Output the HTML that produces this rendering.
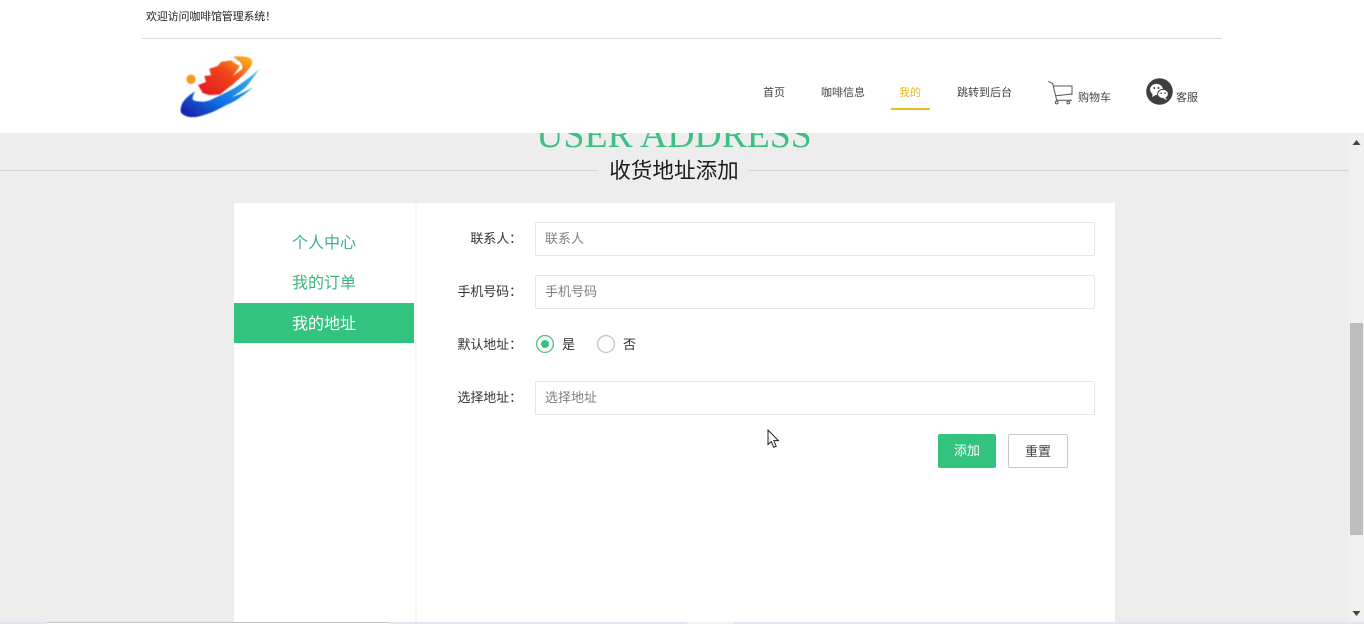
<!DOCTYPE html>
<html lang="zh">
<head>
<meta charset="utf-8">
<title>收货地址添加</title>
<style>
html,body{margin:0;padding:0;width:1364px;height:624px;overflow:hidden;background:#ededed;font-family:"Liberation Sans","WenQuanYi Zen Hei","Noto Sans CJK SC",sans-serif;}
.a{position:absolute;white-space:nowrap;}
.t{position:absolute;white-space:nowrap;line-height:20px;height:20px;}
.inp{position:absolute;left:535px;width:558px;height:32px;border:1px solid #e6e6e6;background:#fff;border-radius:2px;font-size:13px;line-height:32px;color:#808080;text-indent:9px;}
.lb{position:absolute;width:100px;left:422px;text-align:right;font-size:13px;line-height:20px;color:#333;letter-spacing:-.1px;}
.nav{position:absolute;font-size:11px;line-height:16px;color:#444;white-space:nowrap;}
.side{position:absolute;left:234px;width:180px;height:40px;line-height:42px;text-align:center;font-size:16px;color:#3cb57e;}
</style>
</head>
<body>
<!-- content -->
<div class="a" style="left:0;top:170px;width:1349px;height:1px;background:#d4d4d4"></div>
<div class="a" style="left:598px;top:155px;width:150px;height:30px;background:#ededed"></div>
<div class="a" style="left:534px;top:113px;width:280px;text-align:center;font-family:'Liberation Serif',serif;font-size:37.7px;line-height:44px;color:#3cc083;">USER ADDRESS</div>
<div class="a" style="left:598px;top:156px;width:152px;text-align:center;font-size:21.600px;line-height:30px;color:#1c1c1c;">收货地址添加</div>

<div class="a" style="left:234px;top:203px;width:881px;height:419px;background:#fff"></div>
<div class="a" style="left:415px;top:203px;width:2px;height:419px;background:#f4f6f8"></div>

<div class="side" style="top:223px">个人中心</div>
<div class="side" style="top:263px">我的订单</div>
<div class="side" style="top:303px;background:#32c37e;color:#fff;line-height:43px">我的地址</div>

<div class="lb" style="top:229px">联系人：</div>
<div class="inp" style="top:222px">联系人</div>
<div class="lb" style="top:282px">手机号码：</div>
<div class="inp" style="top:275px">手机号码</div>
<div class="lb" style="top:335px">默认地址：</div>

<svg class="a" style="left:535px;top:334px" width="20" height="20" viewBox="0 0 20 20"><circle cx="10" cy="10" r="8.4" fill="#fff" stroke="#5cc08f" stroke-width="1.4"/><circle cx="10" cy="10" r="4" fill="#32c37e"/></svg>
<div class="t" style="left:562px;top:335px;font-size:13px;color:#333">是</div>
<svg class="a" style="left:596px;top:334px" width="20" height="20" viewBox="0 0 20 20"><circle cx="10" cy="10" r="8.4" fill="#fff" stroke="#c6c6c6" stroke-width="1.4"/></svg>
<div class="t" style="left:623px;top:335px;font-size:13px;color:#333">否</div>

<div class="lb" style="top:388px">选择地址：</div>
<div class="inp" style="top:381px">选择地址</div>

<div class="a" style="left:938px;top:434px;width:58px;height:34px;background:#32c37e;border-radius:2px;color:#fff;font-size:13px;line-height:33px;text-align:center">添加</div>
<div class="a" style="left:1008px;top:434px;width:58px;height:32px;border:1px solid #c9c9c9;background:#fff;border-radius:2px;color:#444;font-size:13px;line-height:33px;text-align:center">重置</div>

<!-- cursor -->
<svg class="a" style="left:767px;top:429px" width="14" height="20" viewBox="0 0 14 20"><path d="M1 1V15.500L4.300 12.600L6.700 18.300L9.200 17.200L6.800 11.600H11.400Z" fill="#fff" stroke="#222" stroke-width="1"/></svg>

<!-- header -->
<div class="a" style="left:0;top:0;width:1364px;height:133px;background:#fff"></div>
<div class="a" style="left:142px;top:38px;width:1080px;height:1px;background:#dcdcdc"></div>
<div class="a" style="left:146px;top:9px;font-size:11px;line-height:16px;color:#222;letter-spacing:-.17px">欢迎访问咖啡馆管理系统！</div>

<svg class="a" style="left:176px;top:52px;filter:blur(.4px)" width="90" height="70" viewBox="0 0 90 70">
<defs>
<linearGradient id="g1" x1="0" y1="1" x2="1" y2="0"><stop offset="0" stop-color="#1a12a8"/><stop offset=".4" stop-color="#0f6fe0"/><stop offset=".75" stop-color="#2a9cea"/><stop offset="1" stop-color="#5cc0f0"/></linearGradient>
<linearGradient id="g2" x1="0" y1="1" x2="1" y2="0"><stop offset="0" stop-color="#e3151f"/><stop offset=".55" stop-color="#f0451a"/><stop offset=".8" stop-color="#f78a1a"/><stop offset="1" stop-color="#f9c01a"/></linearGradient>
</defs>
<circle cx="15" cy="27.300" r="4.700" fill="#f59a23"/>
<path d="M19.300 39.300C11 44 6 50 5 55C4 59 5 61 6 61.700C10 65 15 65.500 20 65C26 64 31 62 36.700 60C41 58 46 55.500 50 53.300C56 50.500 60 48.500 62 47C67 43.500 73 39 77 35C73 37.500 69 39.500 66 41C62 43 59 44 56 45C61 42 66 38.500 70 35C75 29 80 22 83.300 16.700C77 23 69 29 60 35C54 38.500 49 41 45 43C40 45 36 47.500 33 48.500C30 49.500 27 50 25 49.500C21 49.500 18.500 49 16.700 47.500C16.500 45.500 17 43 19.300 39.300Z" fill="url(#g1)"/>
<path d="M22 33L30 30L28.300 24L35 23.300L33.300 16.700L41.700 14L45 10L55 8.300L60 12L64 14L57 24L66 17C68 13 64 9 57 5C62 4 70 4 74 6C78 9 76 14 72 18C66 25 60 29 56.700 32.700C52 36 48 39 44 42.500L33.300 43L26.700 41Z" fill="url(#g2)"/>
</svg>

<div class="nav" style="left:763px;top:84.500px">首页</div>
<div class="nav" style="left:821px;top:84.500px">咖啡信息</div>
<div class="nav" style="left:899px;top:84.500px;color:#eab91c">我的</div>
<div class="a" style="left:891px;top:108px;width:39px;height:2px;background:#e9b81f"></div>
<div class="nav" style="left:957px;top:84.500px">跳转到后台</div>

<svg class="a" style="left:1047px;top:80px" width="27" height="26" viewBox="0 0 27 26" fill="none" stroke="#555" stroke-width="1"><path d="M1.300 1.300L5.700 3.700L9.700 20.300H25"/><path d="M6 6H25V15"/><path d="M9 15.700L25 14"/><circle cx="9.700" cy="22.500" r="1.400"/><circle cx="21.300" cy="22.500" r="1.400"/></svg>
<div class="nav" style="left:1078px;top:90px">购物车</div>

<svg class="a" style="left:1146px;top:78px" width="27" height="27" viewBox="0 0 27 27"><circle cx="13.500" cy="13.500" r="13.300" fill="#3f3f3f"/><ellipse cx="10.500" cy="11.500" rx="6.400" ry="5.600" fill="#fff"/><path d="M7 15L6 19L10.500 16.500Z" fill="#fff"/><ellipse cx="17" cy="16" rx="5.400" ry="4.600" fill="#fff" stroke="#3f3f3f" stroke-width="1"/><path d="M19.500 19.500L21 22L17.500 20.500Z" fill="#fff"/><circle cx="8.300" cy="10" r="1" fill="#3f3f3f"/><circle cx="12.500" cy="10" r="1" fill="#3f3f3f"/><circle cx="15.200" cy="15.200" r=".8" fill="#3f3f3f"/><circle cx="19" cy="15.200" r=".8" fill="#3f3f3f"/></svg>
<div class="nav" style="left:1176px;top:90px">客服</div>

<!-- scrollbar -->
<div class="a" style="left:1349px;top:133px;width:15px;height:489px;background:#f0f0f0"></div>
<div class="a" style="left:1350px;top:323px;width:13px;height:212px;background:#bdbdbd"></div>
<svg class="a" style="left:1352px;top:139px" width="9" height="7" viewBox="0 0 9 7"><path d="M4.500 1L8.500 6H.5Z" fill="#444"/></svg>
<svg class="a" style="left:1352px;top:610px" width="9" height="7" viewBox="0 0 9 7"><path d="M4.500 6L8.500 1H.5Z" fill="#444"/></svg>

<!-- bottom strip -->
<div class="a" style="left:0;top:622px;width:1364px;height:2px;background:#e4e4f0"></div>
<div class="a" style="left:47px;top:622px;width:343px;height:2px;background:#fff;border-top:1px solid #c4c4c4;box-sizing:border-box"></div>
<div class="a" style="left:687px;top:622px;width:47px;height:2px;background:#f2f2f2"></div>
</body>
</html>
